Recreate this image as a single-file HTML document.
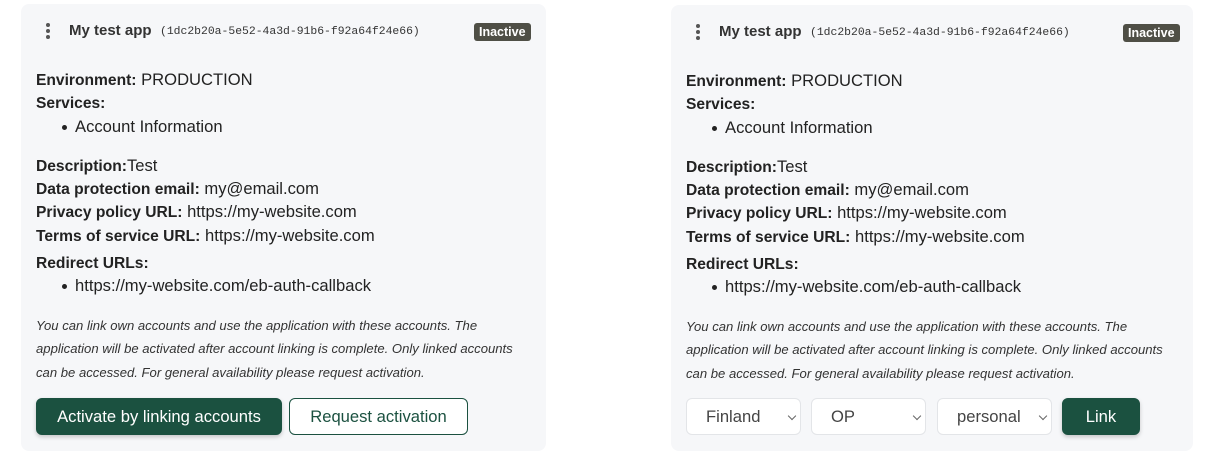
<!DOCTYPE html>
<html><head><meta charset="utf-8"><style>
*{margin:0;padding:0;box-sizing:border-box}
body{width:1215px;height:451px;background:#fff;font-family:"Liberation Sans",Arial,sans-serif;color:#222;position:relative;overflow:hidden}
.card{position:absolute;background:#f6f7f9;border-radius:8px}
.t{position:absolute;white-space:nowrap;font-size:16.6px;line-height:20px}
b{font-weight:bold;font-size:15.6px}
.dot{position:absolute;width:4px;height:4px;border-radius:50%;background:#555}
.hd{font-weight:bold;font-size:15px;color:#333}
.id{font-family:"Liberation Mono",monospace;font-size:11.4px;color:#333}
.badge{position:absolute;background:#4f4f46;color:#fff;font-weight:bold;font-size:12.5px;line-height:18px;padding:0 5px;border-radius:3px}
.it{font-style:italic;font-size:13.1px;color:#333}
.btn{position:absolute;height:37px;border-radius:6px;font-size:16.6px;line-height:35px;text-align:center}
.pri{background:#1b5140;color:#fff;border:1px solid #1b5140;box-shadow:0 2px 4px rgba(0,0,0,.2)}
.sec{background:#fff;color:#1b5140;border:1px solid #1b5140}
.sel{position:absolute;top:398px;height:37px;width:115px;background:#fff;border:1px solid #e3e5e8;border-radius:6px;font-size:16.6px;line-height:35px;color:#444}
.sel span{position:absolute;left:19px}
.sel i{position:absolute;right:5px;top:14px;width:6px;height:6px;border-right:1px solid #666;border-bottom:1px solid #666;transform:rotate(45deg)}
.bul{position:absolute;width:5px;height:5px;border-radius:50%;background:#222}
</style></head><body>

<div class="card" style="left:21px;top:4px;width:525px;height:447px"></div>
<div class="card" style="left:671px;top:5px;width:522px;height:446px"></div>

<!-- left card -->
<div class="dot" style="left:46px;top:23px"></div><div class="dot" style="left:46px;top:29px"></div><div class="dot" style="left:46px;top:35px"></div>
<div class="t hd" style="left:69px;top:21px">My test app</div>
<div class="t id" style="left:160px;top:22px">(1dc2b20a-5e52-4a3d-91b6-f92a64f24e66)</div>
<div class="badge" style="left:474px;top:23px">Inactive</div>
<div class="t" style="left:36px;top:70px"><b>Environment:</b> PRODUCTION</div>
<div class="t" style="left:36px;top:93px"><b>Services:</b></div>
<div class="bul" style="left:62px;top:125px"></div><div class="t" style="left:75px;top:117px">Account Information</div>
<div class="t" style="left:36px;top:156px"><b>Description:</b>Test</div>
<div class="t" style="left:36px;top:179px"><b>Data protection email:</b> my@email.com</div>
<div class="t" style="left:36px;top:202px"><b>Privacy policy URL:</b> https://my-website.com</div>
<div class="t" style="left:36px;top:226px"><b>Terms of service URL:</b> https://my-website.com</div>
<div class="t" style="left:36px;top:253px"><b>Redirect URLs:</b></div>
<div class="bul" style="left:62px;top:284px"></div><div class="t" style="left:75px;top:276px">https://my-website.com/eb-auth-callback</div>
<div class="t it" style="left:36px;top:316px">You can link own accounts and use the application with these accounts. The</div>
<div class="t it" style="left:36px;top:339px">application will be activated after account linking is complete. Only linked accounts</div>
<div class="t it" style="left:36px;top:363px">can be accessed. For general availability please request activation.</div>
<div class="btn pri" style="left:36px;top:398px;width:246px">Activate by linking accounts</div>
<div class="btn sec" style="left:289px;top:398px;width:179px">Request activation</div>

<!-- right card -->
<div class="dot" style="left:696px;top:24px"></div><div class="dot" style="left:696px;top:30px"></div><div class="dot" style="left:696px;top:36px"></div>
<div class="t hd" style="left:719px;top:22px">My test app</div>
<div class="t id" style="left:810px;top:23px">(1dc2b20a-5e52-4a3d-91b6-f92a64f24e66)</div>
<div class="badge" style="left:1123px;top:24px">Inactive</div>
<div class="t" style="left:686px;top:71px"><b>Environment:</b> PRODUCTION</div>
<div class="t" style="left:686px;top:94px"><b>Services:</b></div>
<div class="bul" style="left:712px;top:126px"></div><div class="t" style="left:725px;top:118px">Account Information</div>
<div class="t" style="left:686px;top:157px"><b>Description:</b>Test</div>
<div class="t" style="left:686px;top:180px"><b>Data protection email:</b> my@email.com</div>
<div class="t" style="left:686px;top:203px"><b>Privacy policy URL:</b> https://my-website.com</div>
<div class="t" style="left:686px;top:227px"><b>Terms of service URL:</b> https://my-website.com</div>
<div class="t" style="left:686px;top:254px"><b>Redirect URLs:</b></div>
<div class="bul" style="left:712px;top:285px"></div><div class="t" style="left:725px;top:277px">https://my-website.com/eb-auth-callback</div>
<div class="t it" style="left:686px;top:317px">You can link own accounts and use the application with these accounts. The</div>
<div class="t it" style="left:686px;top:340px">application will be activated after account linking is complete. Only linked accounts</div>
<div class="t it" style="left:686px;top:364px">can be accessed. For general availability please request activation.</div>
<div class="sel" style="left:686px"><span>Finland</span><i></i></div>
<div class="sel" style="left:811px"><span>OP</span><i></i></div>
<div class="sel" style="left:937px"><span>personal</span><i></i></div>
<div class="btn pri" style="left:1062px;top:398px;width:78px">Link</div>
</body></html>
